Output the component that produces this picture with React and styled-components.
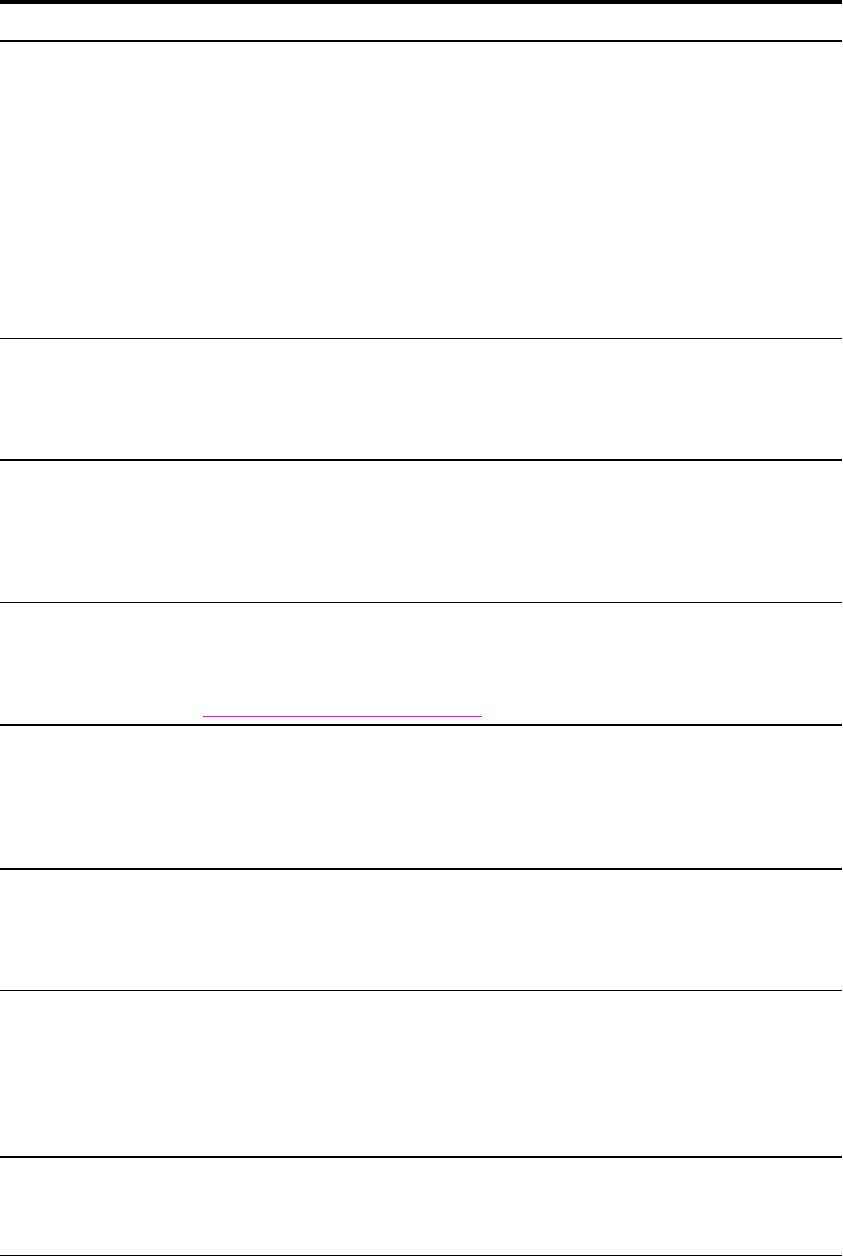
import styled, { createGlobalStyle } from 'styled-components';

const Global = createGlobalStyle`
  body {
    margin: 0;
    background: #ffffff;
    font-family: "Liberation Sans", Arial, sans-serif;
  }
`;

const rows = [
  { height: 36, border: 2 },
  { height: 296, border: 1 },
  { height: 120, border: 2 },
  { height: 141, border: 1 },
  { height: 121, border: 2, link: true },
  { height: 142, border: 2 },
  { height: 120, border: 1 },
  { height: 165, border: 2 },
  { height: 97, border: 1 },
];

export default function App() {
  return (
    <>
      <Global />
      <Table>
        {rows.map((r, i) => (
          <Row key={i} h={r.height} b={r.border}>
            {r.link && (
              <LinkCell>
                <Link href="#" />
              </LinkCell>
            )}
          </Row>
        ))}
      </Table>
    </>
  );
}

const Table = styled.div`
  width: 842px;
  border-top: 4px solid #000;
  display: flex;
  flex-direction: column;
`;

const Row = styled.div`
  height: ${(p) => p.h}px;
  border-bottom: ${(p) => p.b}px solid #000;
  display: flex;
  align-items: flex-end;
`;

const LinkCell = styled.div`
  padding-left: 203px;
  padding-bottom: 7px;
  display: flex;
`;

const Link = styled.a`
  display: block;
  width: 279px;
  height: 0;
  border-bottom: 1px solid #ff00ff;
`;
